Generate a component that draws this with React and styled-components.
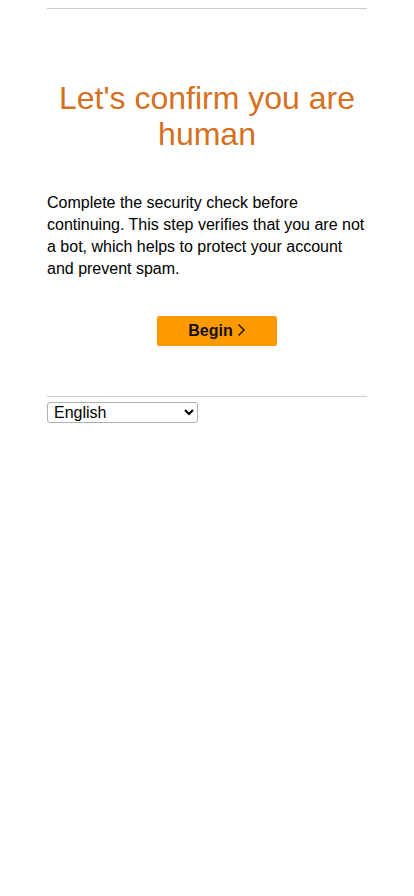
import React from "react";
import styled, { createGlobalStyle } from "styled-components";

const GlobalStyle = createGlobalStyle`
  html, body {
    margin: 0;
    padding: 0;
    background: #ffffff;
  }
  body {
    font-family: "Liberation Sans", Arial, sans-serif;
    color: #000000;
  }
`;

const Page = styled.div`
  width: 320px;
  margin: 0 auto;
  padding-top: 8px;
`;

const Main = styled.main`
  border-top: 1px solid #cccccc;
  padding-top: 71px;
`;

const Title = styled.h1`
  margin: 0;
  font-size: 32px;
  font-weight: 400;
  line-height: 36px;
  text-align: center;
  color: #d5701e;
`;

const Text = styled.p`
  margin: 40px 0 0;
  font-size: 16px;
  line-height: 22px;
`;

const Actions = styled.div`
  display: flex;
  justify-content: center;
  padding: 36px 0 0 20px;
`;

const Button = styled.button`
  width: 120px;
  height: 30px;
  display: flex;
  align-items: center;
  justify-content: center;
  gap: 4px;
  border: none;
  border-radius: 2px;
  background: #ff9900;
  color: #111111;
  font-family: "Liberation Sans", Arial, sans-serif;
  font-size: 16px;
  font-weight: 700;
  cursor: pointer;
  svg {
    margin-top: -3px;
  }
`;

const Footer = styled.footer`
  margin-top: 50px;
  border-top: 1px solid #cccccc;
  padding-top: 5px;
`;

const LangSelect = styled.select`
  width: 151px;
  height: 21px;
  font-family: "Liberation Sans", Arial, sans-serif;
  font-size: 16px;
  border: 1px solid #b0b0b0;
  border-radius: 3px;
  background: #ffffff;
  color: #000000;
  padding: 0 2px;
`;

const Chevron = () => (
  <svg width="9" height="14" viewBox="0 0 9 14" fill="none">
    <path d="M1.5 1.5L7 7L1.5 12.5" stroke="#111" strokeWidth="1.4" />
  </svg>
);

export default function App() {
  return (
    <>
      <GlobalStyle />
      <Page>
        <Main>
          <Title>Let's confirm you are human</Title>
          <Text>
            Complete the security check before continuing. This step verifies
            that you are not a bot, which helps to protect your account and
            prevent spam.
          </Text>
          <Actions>
            <Button>
              Begin <Chevron />
            </Button>
          </Actions>
        </Main>
        <Footer>
          <LangSelect defaultValue="en">
            <option value="en">English</option>
            <option value="de">Deutsch</option>
            <option value="es">Español</option>
            <option value="fr">Français</option>
          </LangSelect>
        </Footer>
      </Page>
    </>
  );
}
